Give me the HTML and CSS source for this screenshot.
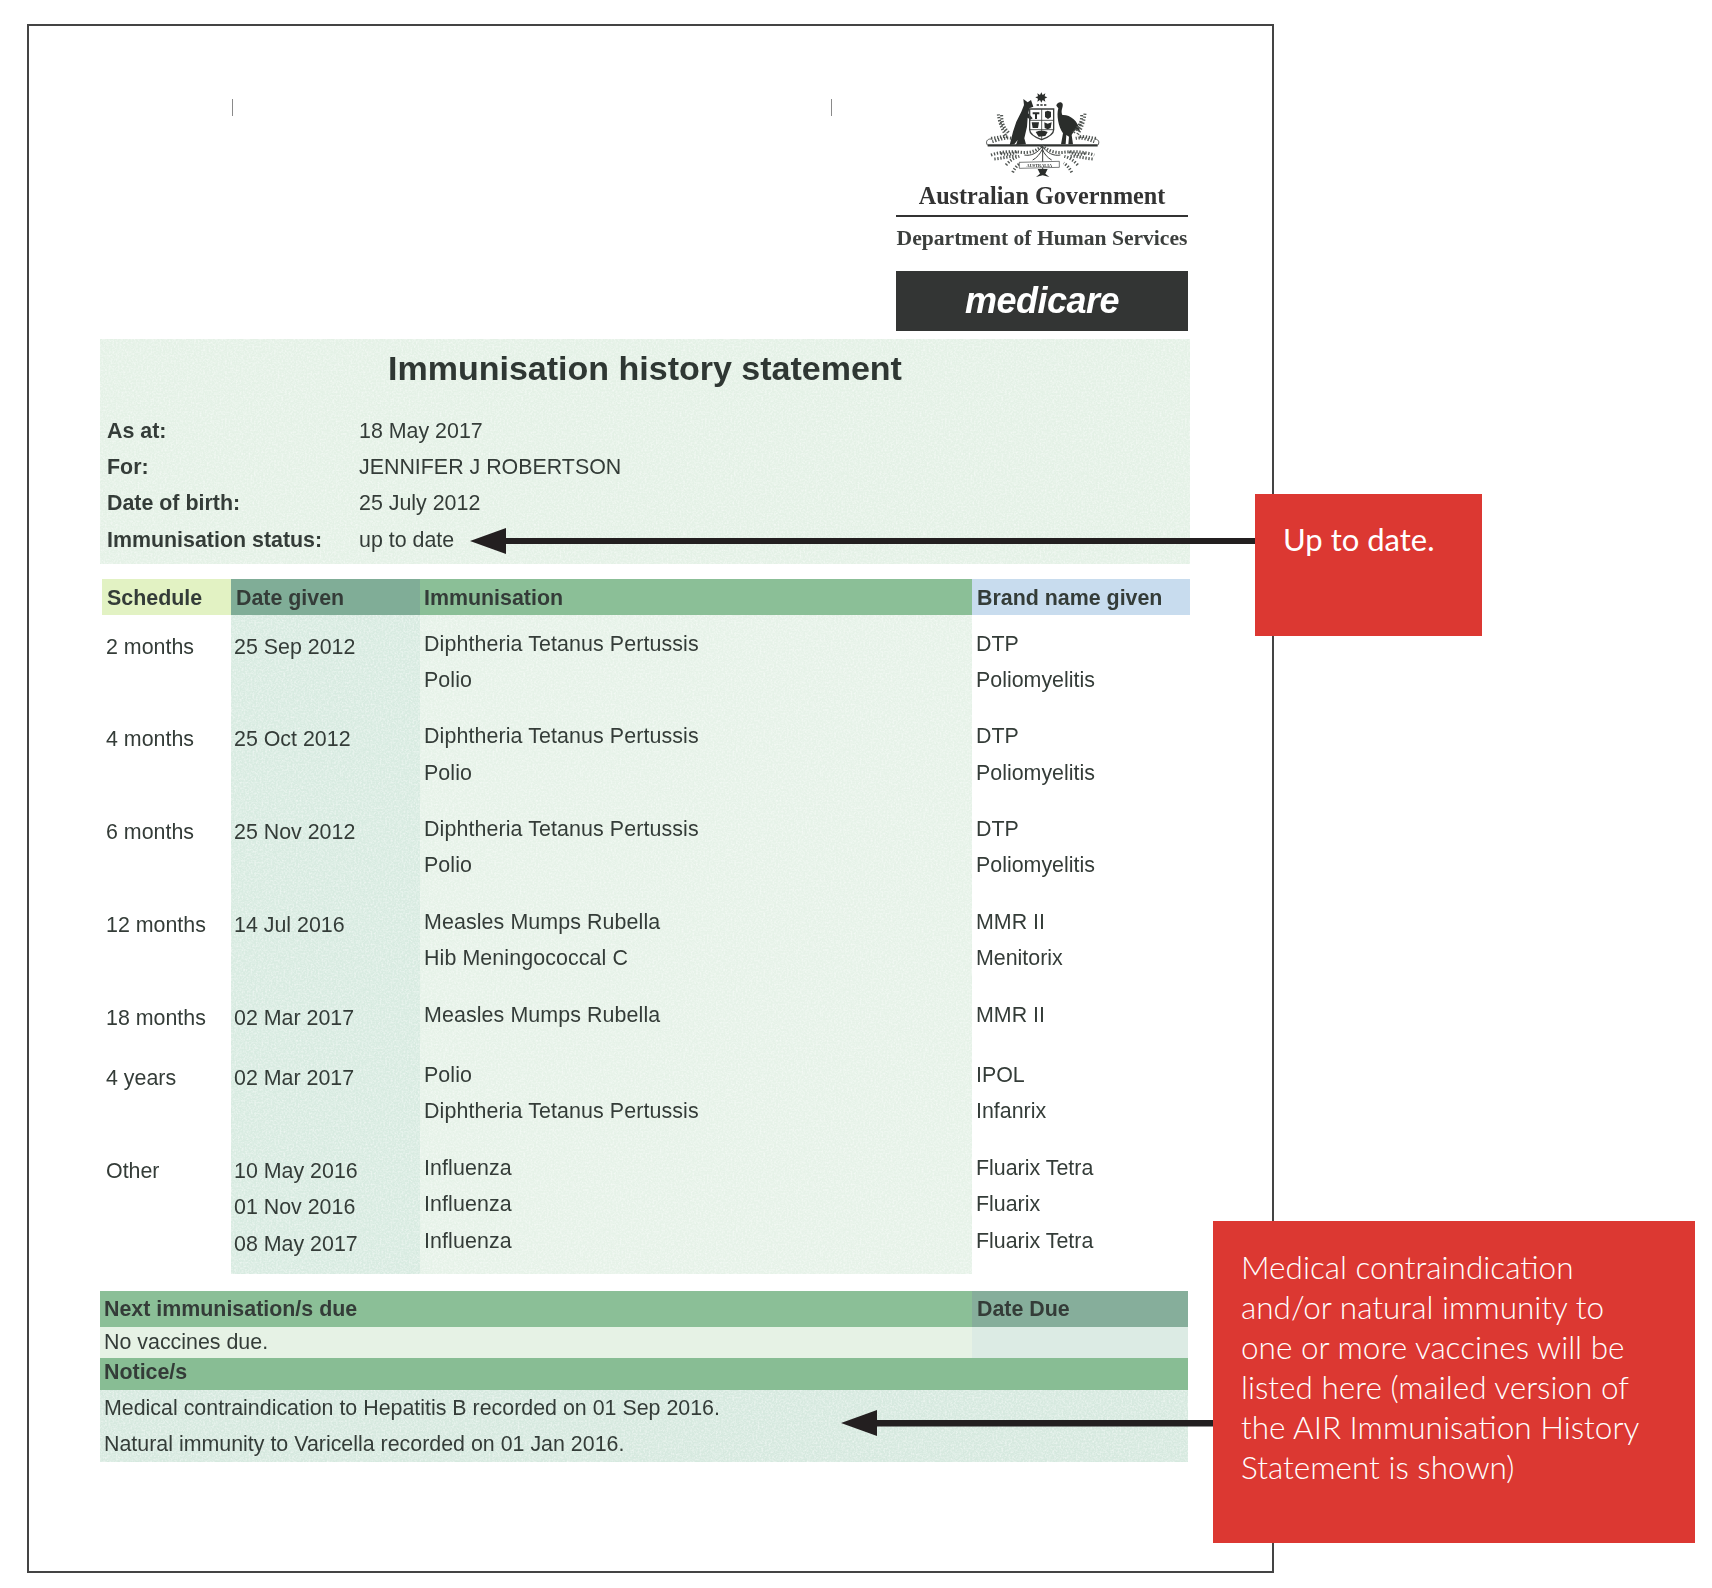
FILE: index.html
```html
<!DOCTYPE html>
<html lang="en">
<head>
<meta charset="utf-8">
<title>Immunisation history statement</title>
<link rel="stylesheet" href="styles.css">
</head>
<body>
<main class="canvas">
  <section class="sheet">
    <header class="letterhead">
      <span class="tick tick-first"></span>
      <span class="tick tick-second"></span>
      <div class="logo">
        <svg class="crest" viewBox="0 0 375 300" aria-hidden="true">
          <polygon class="ink" points="181,22 185,30 193,25 191,34 199,37 191,41 193,50 185,45 181,53 177,45 169,50 171,41 163,37 171,34 169,25 177,30"/>
          <path class="ink" d="M167 58h7v4h-7zM178 58h7v4h-7zM189 58h7v4h-7z"/>
          <path class="ink" d="M127 42l13 10 10-7 7 20-12 5-3 15 13 15-7 4-8-6-2 27-8 35 5 18-30 2 5-15-10 13-14 2 10-40 10-30 15-30 8-20z"/>
          <path class="ink" d="M226 62c1-9 15-15 19-5 2 10-7 19-1 33 21-2 48 15 53 50-12-10-17-5-25 10l4 28-14 0 2-23-8-5-2 28-14 0 6-33c-14-20-20-55-14-75z"/>
          <path class="line thick" d="M146 72h72v62c0 14-20 24-36 30-16-6-36-16-36-30z"/>
          <path class="line" d="M182 72v90M146 106h72M146 134h72"/>
          <path class="ink" d="M155 82h20v6h-7v14h-6v-14h-7zM192 80l8-3 10 3v16l-9 6-9-6zM152 112h22l-3 17h-16zM190 112l10 4 12-4-3 17-9 4-9-4zM164 141c10-5 26-5 36 0l-7 12-20 2z"/>
          <path class="bar" d="M20 181h330"/>
          <path class="line" d="M20 181c-8-10-1-20 10-19M350 181c8-10 1-20-10-19"/>
          <path class="spray" d="M52 88c2 18 8 40 24 66M62 90c0 20 6 38 16 52M60 110c6 12 14 24 26 36M34 170c14-4 38-14 58-10M30 160c20-2 36-8 52-4"/>
          <path class="spray" d="M312 86c-2 18-8 40-22 62M302 90c0 20-6 36-16 50M300 110c-6 12-12 22-24 34M340 170c-14-4-34-14-56-10M345 160c-20-2-36-8-54-4"/>
          <path class="spray" d="M30 210c30-10 60-12 90-8 24 3 50-4 64-22 14 18 40 25 64 22 30-4 62-2 92 8"/>
          <path class="spray" d="M75 240c12-14 24-22 40-26M290 240c-12-14-24-22-40-26M60 205c18 6 34 2 50-6M312 205c-18 6-34 2-50-6M40 222c24-2 48-10 70-8M335 222c-24-2-48-10-70-8M95 262c6-12 14-22 24-28M272 262c-6-12-14-22-24-28"/>
          <path class="stem" d="M185 182v76M130 210c20 4 40-6 54-26 14 20 34 30 54 26M155 225c12-6 22-18 29-32M212 225c-12-6-22-18-28-32"/>
          <path class="ribbon" d="M115 232l120-3v18l-120 3z"/>
          <text class="motto" x="175" y="245" text-anchor="middle">AUSTRALIA</text>
          <path class="ink" d="M170 252h30l-7 14 12 10-20-5-20 5 12-10z"/>
        </svg>
        <p class="gov">Australian Government</p>
        <p class="dept">Department of Human Services</p>
        <div class="medicare"><span class="medicare-word">medicare</span></div>
      </div>
    </header>

    <section class="summary">
      <h1 class="title">Immunisation history statement</h1>
      <dl class="facts">
        <dt class="fact-label">As at:</dt><dd class="fact-value">18 May 2017</dd>
        <dt class="fact-label">For:</dt><dd class="fact-value">JENNIFER J ROBERTSON</dd>
        <dt class="fact-label">Date of birth:</dt><dd class="fact-value">25 July 2012</dd>
        <dt class="fact-label">Immunisation status:</dt><dd class="fact-value">up to date</dd>
      </dl>
    </section>

    <section class="history">
      <div class="row row-head">
        <div class="cell h-schedule">Schedule</div>
        <div class="cell h-date">Date given</div>
        <div class="cell h-imm">Immunisation</div>
        <div class="cell h-brand">Brand name given</div>
      </div>
      <div class="history-body">
        <div class="row first">
          <div class="cell c-schedule"><p class="line-item offset">2 months</p></div>
          <div class="cell c-date"><p class="line-item offset">25 Sep 2012</p></div>
          <div class="cell c-imm"><p class="line-item">Diphtheria Tetanus Pertussis</p><p class="line-item">Polio</p></div>
          <div class="cell c-brand"><p class="line-item">DTP</p><p class="line-item">Poliomyelitis</p></div>
        </div>
        <div class="row">
          <div class="cell c-schedule"><p class="line-item offset">4 months</p></div>
          <div class="cell c-date"><p class="line-item offset">25 Oct 2012</p></div>
          <div class="cell c-imm"><p class="line-item">Diphtheria Tetanus Pertussis</p><p class="line-item">Polio</p></div>
          <div class="cell c-brand"><p class="line-item">DTP</p><p class="line-item">Poliomyelitis</p></div>
        </div>
        <div class="row">
          <div class="cell c-schedule"><p class="line-item offset">6 months</p></div>
          <div class="cell c-date"><p class="line-item offset">25 Nov 2012</p></div>
          <div class="cell c-imm"><p class="line-item">Diphtheria Tetanus Pertussis</p><p class="line-item">Polio</p></div>
          <div class="cell c-brand"><p class="line-item">DTP</p><p class="line-item">Poliomyelitis</p></div>
        </div>
        <div class="row">
          <div class="cell c-schedule"><p class="line-item offset">12 months</p></div>
          <div class="cell c-date"><p class="line-item offset">14 Jul 2016</p></div>
          <div class="cell c-imm"><p class="line-item">Measles Mumps Rubella</p><p class="line-item">Hib Meningococcal C</p></div>
          <div class="cell c-brand"><p class="line-item">MMR II</p><p class="line-item">Menitorix</p></div>
        </div>
        <div class="row wide">
          <div class="cell c-schedule"><p class="line-item offset">18 months</p></div>
          <div class="cell c-date"><p class="line-item offset">02 Mar 2017</p></div>
          <div class="cell c-imm"><p class="line-item">Measles Mumps Rubella</p></div>
          <div class="cell c-brand"><p class="line-item">MMR II</p></div>
        </div>
        <div class="row">
          <div class="cell c-schedule"><p class="line-item offset">4 years</p></div>
          <div class="cell c-date"><p class="line-item offset">02 Mar 2017</p></div>
          <div class="cell c-imm"><p class="line-item">Polio</p><p class="line-item">Diphtheria Tetanus Pertussis</p></div>
          <div class="cell c-brand"><p class="line-item">IPOL</p><p class="line-item">Infanrix</p></div>
        </div>
        <div class="row last">
          <div class="cell c-schedule"><p class="line-item offset">Other</p></div>
          <div class="cell c-date"><p class="line-item offset">10 May 2016</p><p class="line-item offset">01 Nov 2016</p><p class="line-item offset">08 May 2017</p></div>
          <div class="cell c-imm"><p class="line-item">Influenza</p><p class="line-item">Influenza</p><p class="line-item">Influenza</p></div>
          <div class="cell c-brand"><p class="line-item">Fluarix Tetra</p><p class="line-item">Fluarix</p><p class="line-item">Fluarix Tetra</p></div>
        </div>
      </div>
    </section>

    <section class="due">
      <div class="due-row due-head">
        <div class="due-main">Next immunisation/s due</div>
        <div class="due-side due-side-head">Date Due</div>
      </div>
      <div class="due-row due-none">
        <div class="due-main">No vaccines due.</div>
        <div class="due-side due-side-none"></div>
      </div>
      <div class="notice-head">Notice/s</div>
      <div class="notice-body">
        <p class="notice-line">Medical contraindication to Hepatitis B recorded on 01 Sep 2016.</p>
        <p class="notice-line">Natural immunity to Varicella recorded on 01 Jan 2016.</p>
      </div>
    </section>
  </section>

  <svg class="pointer pointer-status" viewBox="0 0 786 26" aria-hidden="true">
    <path d="M0 13 36 0v10h750v6H36v10z"/>
  </svg>
  <aside class="callout callout-status">Up to date.</aside>

  <svg class="pointer pointer-notice" viewBox="0 0 373 26" aria-hidden="true">
    <path d="M0 13 36 0v10h337v6.500H36v9.500z"/>
  </svg>
  <aside class="callout callout-notice">Medical contraindication<br>and/or natural immunity to<br>one or more vaccines will be<br>listed here (mailed version of<br>the AIR Immunisation History<br>Statement is shown)</aside>
</main>
</body>
</html>
```

FILE: styles.css
```css
* { box-sizing: border-box; }
html, body { margin: 0; padding: 0; background: #fff; }
p, h1, dl, dd, dt { margin: 0; }

:root {
  --speckle: url("data:image/svg+xml,%3Csvg xmlns='http://www.w3.org/2000/svg' width='240' height='240'%3E%3Cfilter id='n'%3E%3CfeTurbulence type='fractalNoise' baseFrequency='0.55' numOctaves='2' seed='4'/%3E%3CfeColorMatrix values='0 0 0 0 1 0 0 0 0 1 0 0 0 0 1 0 0 0 1.1 -0.42'/%3E%3C/filter%3E%3Crect width='240' height='240' filter='url(%23n)'/%3E%3C/svg%3E");
}

.canvas {
  position: relative;
  width: 1712px;
  height: 1588px;
  padding: 24px 0 0 27px;
  overflow: hidden;
  font-family: "Liberation Sans", Arial, sans-serif;
  color: #343c38;
}

.sheet {
  width: 1247px;
  height: 1549px;
  border: 2px solid #444;
  padding-left: 71px;
}

/* letterhead */
.letterhead {
  display: flex;
  align-items: flex-start;
  height: 313px;
  filter: blur(0.3px);
}
.tick {
  display: block;
  width: 1px;
  height: 17px;
  margin-top: 73px;
  background: #8a8a8a;
}
.tick-first { margin-left: 132px; }
.tick-second { margin-left: 598px; }
.logo {
  width: 292px;
  margin-left: 64px;
  text-align: center;
}
.crest {
  display: block;
  width: 125px;
  height: 100px;
  margin: 59px 0 0 85px;
  filter: blur(0.4px);
}
.ink { fill: #2a2d2b; }
.line { fill: none; stroke: #3a3d3b; stroke-width: 2.500; }
.thick { stroke-width: 4; }
.bar { fill: none; stroke: #2f3230; stroke-width: 7; }
.spray { fill: none; stroke: #4f5451; stroke-width: 9; stroke-dasharray: 4 5; }
.stem { fill: none; stroke: #3a3d3b; stroke-width: 3; }
.ribbon { fill: #fff; stroke: #3a3d3b; stroke-width: 2; }
.motto {
  font-family: "Liberation Serif", serif;
  font-weight: 700;
  font-size: 13px;
  fill: #2f3230;
}
.gov {
  margin-top: -4px;
  padding-bottom: 4px;
  border-bottom: 2px solid #333;
  font-family: "Liberation Serif", "Times New Roman", serif;
  font-weight: 700;
  font-size: 24.200px;
  line-height: 30px;
  color: #333;
}
.dept {
  margin-top: 7px;
  font-family: "Liberation Serif", "Times New Roman", serif;
  font-weight: 700;
  font-size: 21.600px;
  line-height: 28px;
  color: #3c3f3d;
  white-space: nowrap;
}
.medicare {
  height: 60px;
  margin-top: 19px;
  background: #333534;
  display: flex;
  align-items: center;
  justify-content: center;
}
.medicare-word {
  font-style: italic;
  font-weight: 700;
  font-size: 36px;
  line-height: 40px;
  color: #fff;
  letter-spacing: -0.500px;
}

/* summary panel */
.summary {
  width: 1090px;
  height: 225px;
  background: var(--speckle), #e4f1e6;
  padding-top: 9px;
  filter: blur(0.3px);
}
.title {
  font-size: 34px;
  line-height: 40px;
  font-weight: 700;
  text-align: center;
  color: #2f3733;
}
.facts {
  display: grid;
  grid-template-columns: 252px 1fr;
  grid-auto-rows: 36.400px;
  margin-top: 25px;
  padding-left: 7px;
  font-size: 21.400px;
  align-items: center;
}
.fact-label { font-weight: 700; }

/* history table */
.history {
  width: 1088px;
  margin: 15px 0 0 2px;
  font-size: 21.400px;
  filter: blur(0.3px);
}
.history-body {
  background:
    var(--speckle),
    linear-gradient(90deg,
      #fff 129px,
      #d8ebe1 129px, #d8ebe1 318px,
      #e6f2e8 318px, #e6f2e8 870px,
      #fff 870px);
}
.row {
  display: grid;
  grid-template-columns: 129px 189px 552px 218px;
}
.row-head {
  font-weight: 700;
  line-height: 34px;
}
.row-head .cell { height: 36px; padding-top: 2px; padding-bottom: 0; }
.cell { padding-bottom: 20px; }
.first .cell { padding-top: 10.500px; }
.wide .cell { padding-bottom: 24px; }
.last .cell { padding-bottom: 15px; }
.c-schedule { padding-left: 4px; }
.c-date { padding-left: 3px; }
.c-imm { padding-left: 4px; letter-spacing: 0.100px; }
.c-brand { padding-left: 4px; }
.h-schedule { padding-left: 5px; background: #e2f2c3; }
.h-date { padding-left: 5px; background: #80ad97; }
.h-imm { padding-left: 4px; background: #8bbf97; }
.h-brand { padding-left: 5px; background: #c8dcee; }
.line-item { height: 36.400px; line-height: 36.400px; }
.offset { position: relative; top: 3px; }

/* next due and notices */
.due {
  width: 1088px;
  margin-top: 17.500px;
  font-size: 21.400px;
  filter: blur(0.3px);
}
.due-row { display: grid; grid-template-columns: 872px 216px; }
.due-main, .notice-head, .notice-line { padding-left: 4px; }
.due-side { padding-left: 5px; }
.due-head {
  height: 36px;
  line-height: 37px;
  font-weight: 700;
  background: #8bbf97;
}
.due-side-head { background: #86ae9b; }
.due-none {
  height: 31px;
  line-height: 30px;
  background: #e6f2e5;
}
.due-side-none { background: #dcebe4; }
.notice-head {
  height: 32px;
  line-height: 28px;
  font-weight: 700;
  background: #88bd94;
}
.notice-body {
  height: 72px;
  background: var(--speckle), #d6e9df;
}
.notice-line { height: 36px; line-height: 36px; }

/* annotations over the sheet */
.pointer {
  position: absolute;
  display: block;
  height: 26px;
  fill: #231f20;
}
.pointer-status { left: 470px; top: 528px; width: 786px; }
.pointer-notice { left: 841px; top: 1410px; width: 373px; }
.callout {
  position: absolute;
  background: #dc3832;
  color: #fff;
  font-family: Lato, "Open Sans", sans-serif;
  font-weight: 400;
  font-size: 31px;
  line-height: 40px;
  padding: 25px 0 0 28px;
  white-space: nowrap;
}
.callout-status { left: 1255px; top: 494px; width: 227px; height: 142px; }
.callout-notice { left: 1213px; top: 1221px; width: 482px; height: 322px; padding-top: 26px; font-weight: 300; font-size: 31.500px; }
```
